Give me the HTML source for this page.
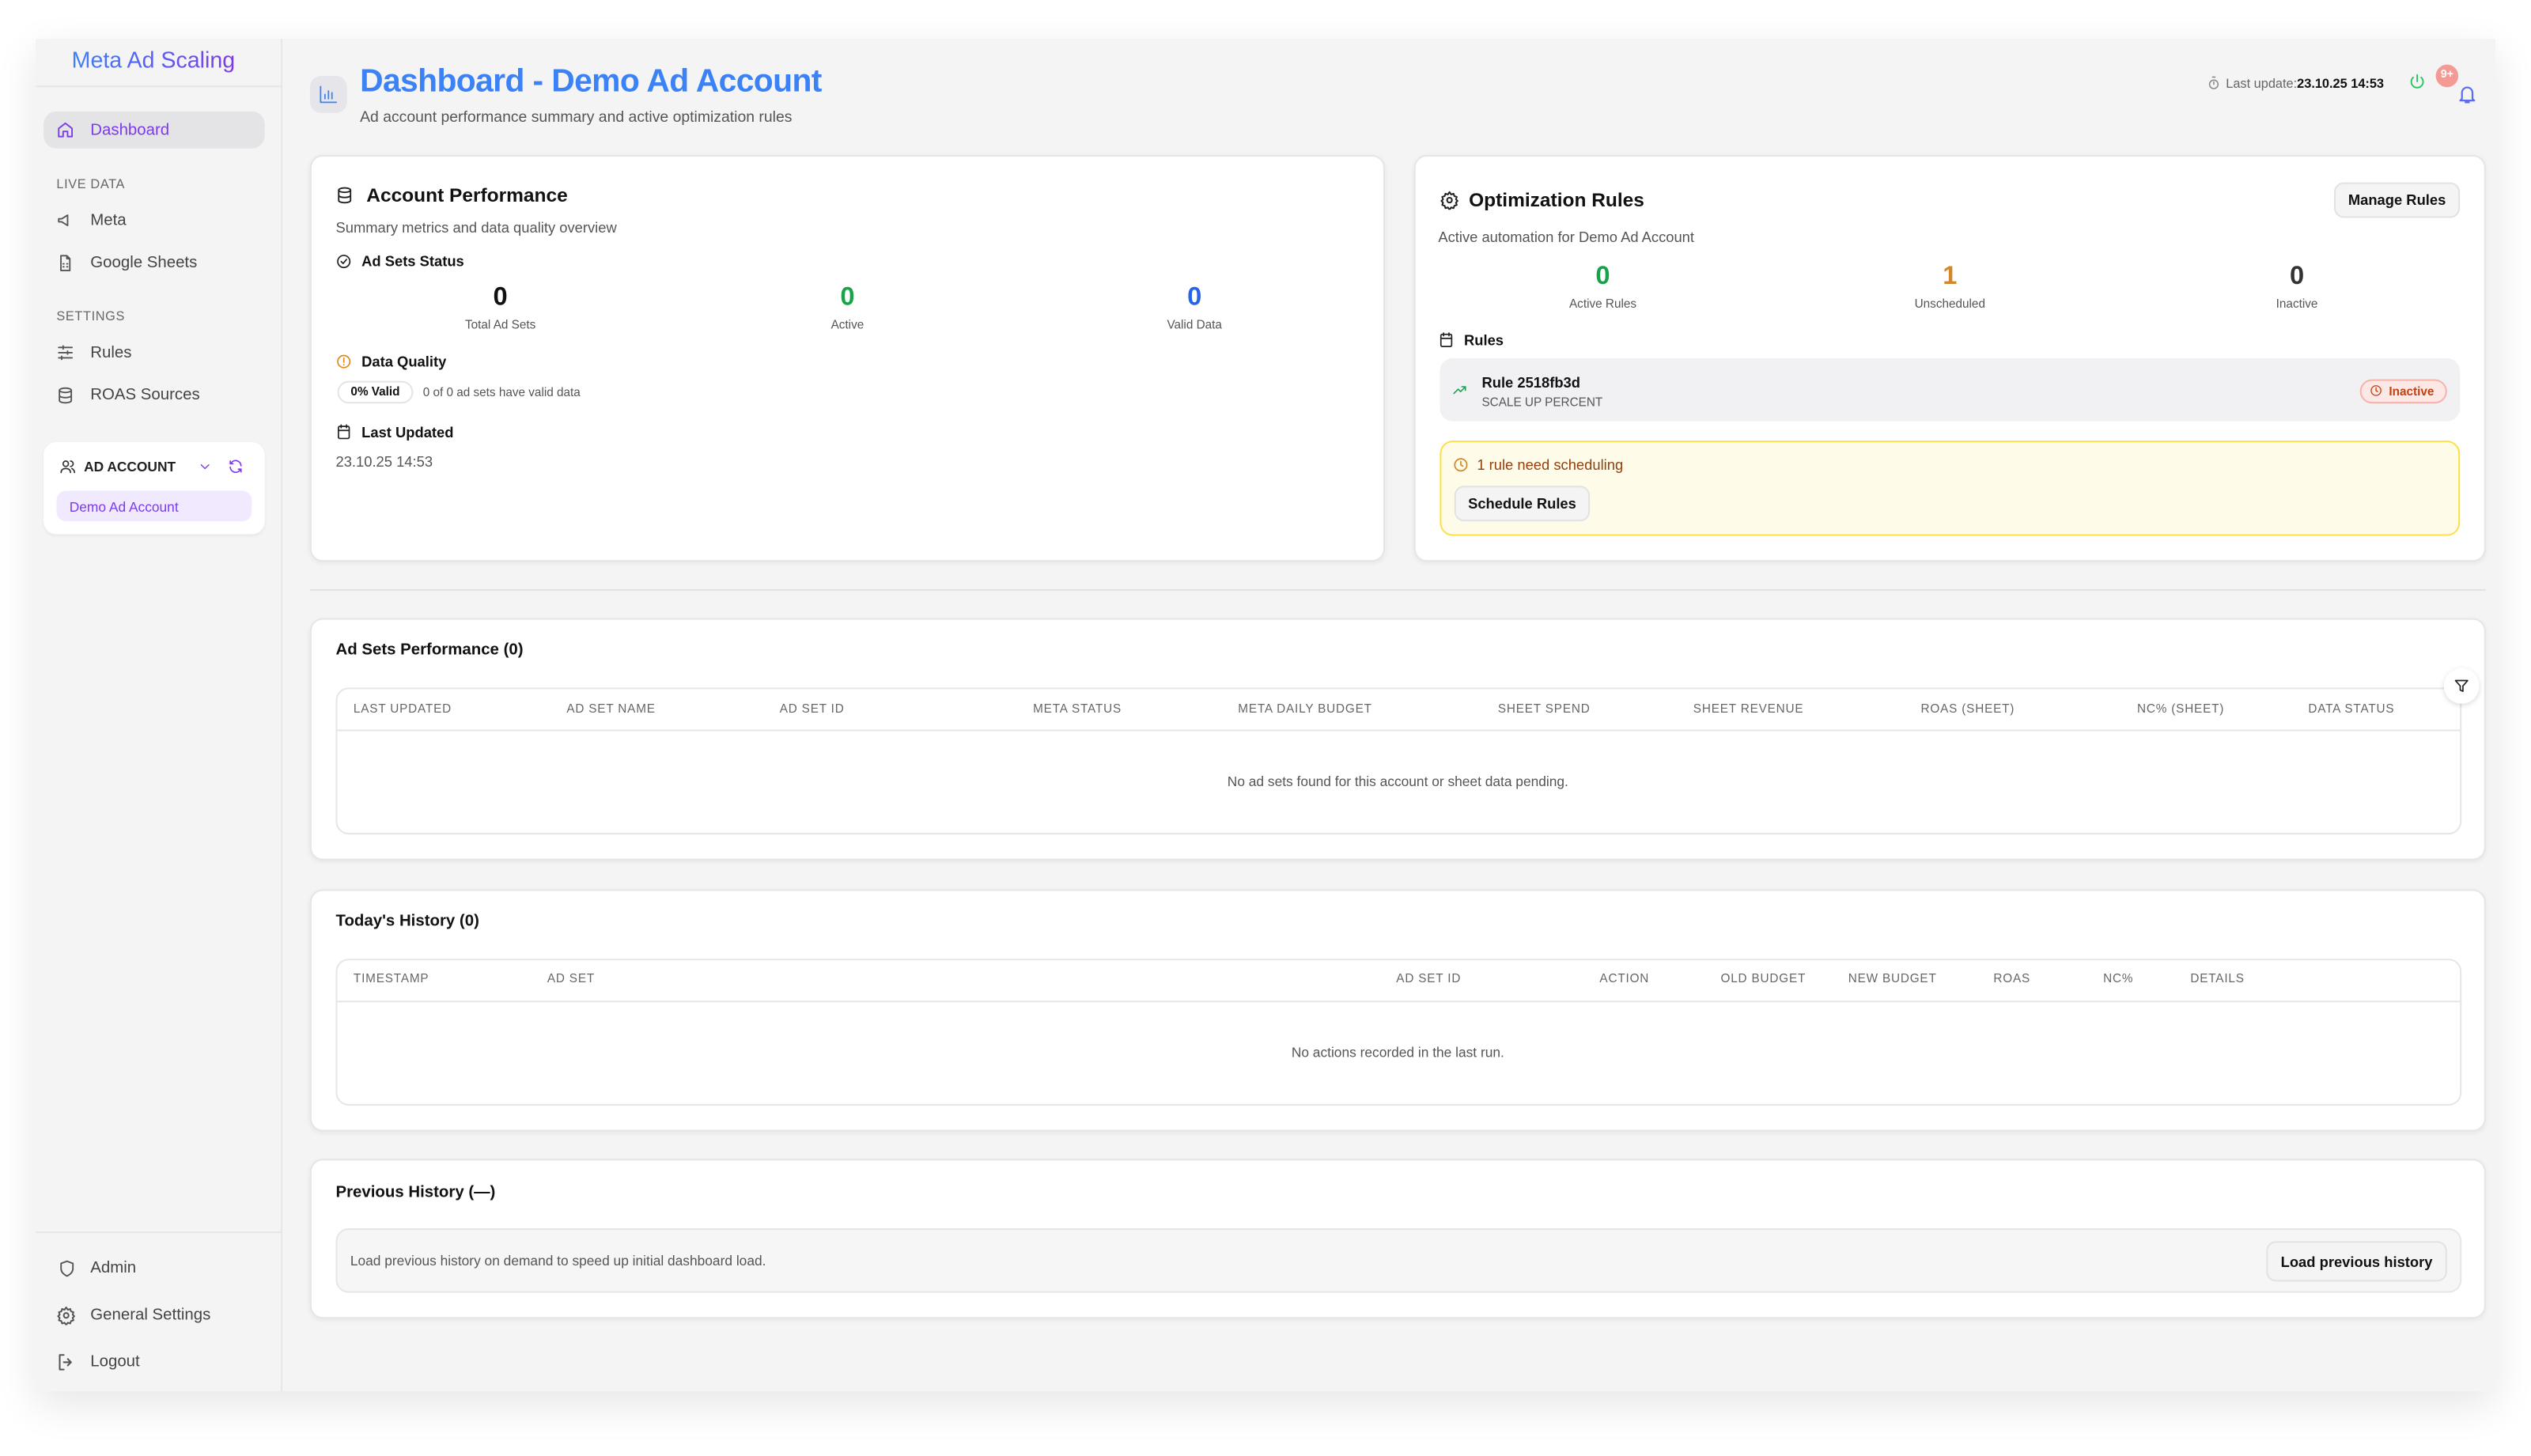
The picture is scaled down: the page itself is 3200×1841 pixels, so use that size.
<!DOCTYPE html>
<html><head><meta charset="utf-8"><style>
*{box-sizing:border-box;margin:0;padding:0}
html,body{width:3200px;height:1840px;overflow:hidden;background:#fff}
#w{position:absolute;left:0;top:0;width:1568px;height:902px;transform:scale(2.0408);transform-origin:0 0;font-family:"Liberation Sans",sans-serif;color:#111}
.a{position:absolute;white-space:nowrap}
.frame{position:absolute;left:22px;top:24px;width:1524px;height:838px;background:#f4f4f4;box-shadow:0 8px 24px rgba(0,0,0,.10)}
.side{position:absolute;left:22px;top:24px;width:153px;height:838px;border-right:1px solid #e6e6e6}
.card{position:absolute;background:#fff;border:1px solid #e6e6e6;border-radius:8px;box-shadow:0 1px 3px rgba(0,0,0,.06)}
.nav{font-size:10px;color:#444;transform:translateY(-50%)}
.sec{font-size:8px;color:#666;letter-spacing:.3px;transform:translateY(-50%)}
.c{transform:translate(-50%,-50%);text-align:center}
.m{transform:translateY(-50%)}
svg.i{position:absolute;fill:none;stroke-width:2;stroke-linecap:round;stroke-linejoin:round}
.th{font-size:7.5px;color:#666;letter-spacing:.4px;transform:translateY(-50%)}
.btn{position:absolute;background:#f4f4f4;border:1px solid #e2e2e2;border-radius:6px;font-size:9px;font-weight:bold;display:flex;align-items:center;justify-content:center;color:#111}
</style></head><body><div id="w">
<div class="frame"></div>
<div class="side"></div>
<div class="a c" style="left:95px;top:37px;font-size:14px;background:linear-gradient(90deg,#3b82f6,#7c3aed);-webkit-background-clip:text;color:transparent">Meta Ad Scaling</div>
<div class="a" style="left:22px;top:53px;width:153px;height:1px;background:#e6e6e6"></div>
<div class="a" style="left:27px;top:69px;width:137px;height:23px;background:#e4e4e7;border-radius:8px"></div>
<svg class="i" style="left:35px;top:75px;stroke:#7c3aed" width="11" height="11" viewBox="0 0 24 24"><path d="M3 10l9-7 9 7v11h-6v-7H9v7H3z"/></svg>
<div class="a nav" style="left:56px;top:81px;color:#7c3aed">Dashboard</div>
<div class="a sec" style="left:35px;top:114px">LIVE DATA</div>
<svg class="i" style="left:35px;top:131px;stroke:#555" width="11" height="11" viewBox="0 0 24 24"><path d="M3 10v4h4l8 5V5L7 10z"/></svg>
<div class="a nav" style="left:56px;top:137px">Meta</div>
<svg class="i" style="left:35px;top:157px;stroke:#555" width="11" height="12" viewBox="0 0 24 24"><path d="M14 2H6v20h12V6z M14 2v4h4 M9 13h1 M14 13h1 M9 17h1 M14 17h1"/></svg>
<div class="a nav" style="left:56px;top:163px">Google Sheets</div>
<div class="a sec" style="left:35px;top:196px">SETTINGS</div>
<svg class="i" style="left:35px;top:213px;stroke:#555" width="11" height="11" viewBox="0 0 24 24"><path d="M3 5h18M3 12h18M3 19h18M9 3v4M15 10v4M7 17v4"/></svg>
<div class="a nav" style="left:56px;top:219px">Rules</div>
<svg class="i" style="left:35px;top:239px;stroke:#555" width="11" height="12" viewBox="0 0 24 24"><ellipse cx="12" cy="5" rx="8" ry="3"/><path d="M4 5v14c0 1.7 3.6 3 8 3s8-1.3 8-3V5M4 12c0 1.7 3.6 3 8 3s8-1.3 8-3"/></svg>
<div class="a nav" style="left:56px;top:245px">ROAS Sources</div>
<div class="a" style="left:27px;top:274px;width:137px;height:57px;background:#fff;border-radius:8px;box-shadow:0 1px 2px rgba(0,0,0,.05)"></div>
<svg class="i" style="left:37px;top:284px;stroke:#333" width="10" height="10" viewBox="0 0 24 24"><circle cx="9" cy="8" r="4"/><path d="M2 21c0-4 3-6 7-6s7 2 7 6M16 4a4 4 0 010 8M22 21c0-3-2-5-4-6"/></svg>
<div class="a m" style="left:52px;top:289px;font-size:8.5px;font-weight:bold;color:#222">AD ACCOUNT</div>
<svg class="i" style="left:123px;top:285px;stroke:#7c3aed" width="8" height="8" viewBox="0 0 24 24"><path d="M5 9l7 7 7-7"/></svg>
<svg class="i" style="left:141px;top:284px;stroke:#7c3aed" width="10" height="10" viewBox="0 0 24 24"><path d="M20 11a8 8 0 00-14-5L4 8M4 4v4h4M4 13a8 8 0 0014 5l2-2M20 20v-4h-4"/></svg>
<div class="a" style="left:35px;top:304px;width:121px;height:19px;background:#f1eafe;border-radius:6px"></div>
<div class="a m" style="left:43px;top:313.5px;font-size:8.5px;color:#7c3aed">Demo Ad Account</div>
<div class="a" style="left:22px;top:763px;width:153px;height:1px;background:#e6e6e6"></div>
<svg class="i" style="left:36px;top:780px;stroke:#555" width="11" height="12" viewBox="0 0 24 24"><path d="M12 2l8 3v7c0 5-4 8-8 10-4-2-8-5-8-10V5z"/></svg>
<div class="a nav" style="left:56px;top:786px">Admin</div>
<svg class="i" style="left:35px;top:809px;stroke:#555" width="12" height="12" viewBox="0 0 24 24"><circle cx="12" cy="12" r="3"/><path d="M12 2l2 3 3-1 1 3 3 1-1 3 2 2-2 2 1 3-3 1-1 3-3-1-2 3-2-3-3 1-1-3-3-1 1-3-2-2 2-2-1-3 3-1 1-3 3 1z"/></svg>
<div class="a nav" style="left:56px;top:815px">General Settings</div>
<svg class="i" style="left:35px;top:838px;stroke:#555" width="12" height="12" viewBox="0 0 24 24"><path d="M9 3H4v18h5M14 8l4 4-4 4M18 12H9"/></svg>
<div class="a nav" style="left:56px;top:844px">Logout</div>

<div class="a" style="left:192px;top:47px;width:23px;height:23px;background:#e6e6ea;border-radius:7px"></div>
<svg class="i" style="left:197px;top:52px;stroke:#3b82f6;stroke-width:1.6" width="13" height="13" viewBox="0 0 24 24"><path d="M3 3v18h18M8 17v-5M12 17V8M16 17v-7"/></svg>
<div class="a m" style="left:223px;top:51px;font-size:20px;font-weight:bold;color:#3b82f6;letter-spacing:-.3px">Dashboard - Demo Ad Account</div>
<div class="a m" style="left:223px;top:73px;font-size:9.5px;color:#555">Ad account performance summary and active optimization rules</div>
<svg class="i" style="left:1367px;top:47px;stroke:#888" width="9" height="9" viewBox="0 0 24 24"><circle cx="12" cy="14" r="7"/><path d="M12 14V10M10 2h4"/></svg>
<div class="a m" style="left:1379px;top:52px;font-size:8px;color:#666">Last update:<b style="color:#111">23.10.25 14:53</b></div>
<svg class="i" style="left:1492px;top:45px;stroke:#22c55e" width="11" height="11" viewBox="0 0 24 24"><path d="M12 3v9M6.5 6.5a8 8 0 1011 0"/></svg>
<div class="a c" style="left:1516px;top:47px;width:14px;height:14px;border-radius:50%;background:#f49a94;color:#fff;font-size:7px;font-weight:bold;line-height:14px">9+</div>
<svg class="i" style="left:1522px;top:52px;stroke:#5b6cf0" width="13" height="13" viewBox="0 0 24 24"><path d="M6 17V10a6 6 0 0112 0v7l2 2H4zM10 21h4"/></svg>

<!-- card1 -->
<div class="card" style="left:192px;top:96px;width:666px;height:252px"></div>
<svg class="i" style="left:208px;top:115px;stroke:#222" width="11" height="12" viewBox="0 0 24 24"><ellipse cx="12" cy="5" rx="8" ry="3"/><path d="M4 5v14c0 1.7 3.6 3 8 3s8-1.3 8-3V5M4 12c0 1.7 3.6 3 8 3s8-1.3 8-3"/></svg>
<div class="a m" style="left:227px;top:121px;font-size:12px;font-weight:bold">Account Performance</div>
<div class="a m" style="left:208px;top:141px;font-size:9px;color:#555">Summary metrics and data quality overview</div>
<svg class="i" style="left:208px;top:157px;stroke:#222" width="10" height="10" viewBox="0 0 24 24"><circle cx="12" cy="12" r="9"/><path d="M8 12l3 3 5-6"/></svg>
<div class="a m" style="left:224px;top:162px;font-size:9px;font-weight:bold">Ad Sets Status</div>
<div class="a c" style="left:310px;top:185px;font-size:16px;font-weight:bold">0</div>
<div class="a c" style="left:310px;top:201px;font-size:7.5px;color:#555">Total Ad Sets</div>
<div class="a c" style="left:525px;top:185px;font-size:16px;font-weight:bold;color:#16a34a">0</div>
<div class="a c" style="left:525px;top:201px;font-size:7.5px;color:#555">Active</div>
<div class="a c" style="left:740px;top:185px;font-size:16px;font-weight:bold;color:#2563eb">0</div>
<div class="a c" style="left:740px;top:201px;font-size:7.5px;color:#555">Valid Data</div>
<svg class="i" style="left:208px;top:219px;stroke:#e08a1e" width="10" height="10" viewBox="0 0 24 24"><circle cx="12" cy="12" r="9"/><path d="M12 7v6M12 16.5v.5"/></svg>
<div class="a m" style="left:224px;top:224px;font-size:9px;font-weight:bold">Data Quality</div>
<div class="a" style="left:209px;top:236px;width:47px;height:14px;border:1px solid #e4e4e4;border-radius:7px;font-size:7.5px;font-weight:bold;text-align:center;line-height:12px">0% Valid</div>
<div class="a m" style="left:262px;top:243px;font-size:7.5px;color:#555">0 of 0 ad sets have valid data</div>
<svg class="i" style="left:208px;top:262px;stroke:#222" width="10" height="11" viewBox="0 0 24 24"><rect x="4" y="4" width="16" height="18" rx="2"/><path d="M4 10h16M8 2v4M16 2v4"/></svg>
<div class="a m" style="left:224px;top:268px;font-size:9px;font-weight:bold">Last Updated</div>
<div class="a m" style="left:208px;top:286px;font-size:9px;color:#555">23.10.25 14:53</div>

<!-- card2 -->
<div class="card" style="left:876px;top:96px;width:664px;height:252px"></div>
<svg class="i" style="left:892px;top:118px;stroke:#222" width="12" height="12" viewBox="0 0 24 24"><circle cx="12" cy="12" r="3"/><path d="M12 2l2 3 3-1 1 3 3 1-1 3 2 2-2 2 1 3-3 1-1 3-3-1-2 3-2-3-3 1-1-3-3-1 1-3-2-2 2-2-1-3 3-1 1-3 3 1z"/></svg>
<div class="a m" style="left:910px;top:124px;font-size:12px;font-weight:bold">Optimization Rules</div>
<div class="btn" style="left:1446px;top:113px;width:78px;height:22px">Manage Rules</div>
<div class="a m" style="left:891px;top:147px;font-size:9px;color:#555">Active automation for Demo Ad Account</div>
<div class="a c" style="left:993px;top:172px;font-size:16px;font-weight:bold;color:#16a34a">0</div>
<div class="a c" style="left:993px;top:188px;font-size:7.5px;color:#555">Active Rules</div>
<div class="a c" style="left:1208px;top:172px;font-size:16px;font-weight:bold;color:#d4872a">1</div>
<div class="a c" style="left:1208px;top:188px;font-size:7.5px;color:#555">Unscheduled</div>
<div class="a c" style="left:1423px;top:172px;font-size:16px;font-weight:bold;color:#333">0</div>
<div class="a c" style="left:1423px;top:188px;font-size:7.5px;color:#555">Inactive</div>
<svg class="i" style="left:891px;top:205px;stroke:#222" width="10" height="11" viewBox="0 0 24 24"><rect x="4" y="4" width="16" height="18" rx="2"/><path d="M4 10h16M8 2v4M16 2v4"/></svg>
<div class="a m" style="left:907px;top:211px;font-size:9px;font-weight:bold">Rules</div>
<div class="a" style="left:892px;top:222px;width:632px;height:39px;background:#f1f1f3;border-radius:8px"></div>
<svg class="i" style="left:899px;top:237px;stroke:#16a34a" width="11" height="9" viewBox="0 0 24 24"><path d="M2 18l7-7 4 4 8-8M15 7h6v6"/></svg>
<div class="a m" style="left:918px;top:237px;font-size:9px;font-weight:bold">Rule 2518fb3d</div>
<div class="a m" style="left:918px;top:249px;font-size:7.5px;color:#555">SCALE UP PERCENT</div>
<div class="a" style="left:1462px;top:235px;width:54px;height:15px;background:#fde8e6;border:1px solid #f5b3aa;border-radius:8px;font-size:7.5px;font-weight:bold;color:#c2410c;line-height:13px;padding-left:17px">Inactive</div>
<svg class="i" style="left:1468px;top:238px;stroke:#c2410c" width="8" height="8" viewBox="0 0 24 24"><circle cx="12" cy="12" r="9"/><path d="M12 7v5l3 2"/></svg>
<div class="a" style="left:892px;top:273px;width:632px;height:59px;background:#fefce8;border:1px solid #fde047;border-radius:8px"></div>
<svg class="i" style="left:900px;top:283px;stroke:#d4872a" width="10" height="10" viewBox="0 0 24 24"><circle cx="12" cy="12" r="9"/><path d="M12 7v5l3 2"/></svg>
<div class="a m" style="left:915px;top:288px;font-size:9px;color:#92400e">1 rule need scheduling</div>
<div class="btn" style="left:901px;top:301px;width:84px;height:22px">Schedule Rules</div>

<div class="a" style="left:192px;top:365px;width:1348px;height:1px;background:#e2e2e2"></div>

<!-- card3 -->
<div class="card" style="left:192px;top:383px;width:1348px;height:150px"></div>
<div class="a m" style="left:208px;top:403px;font-size:10px;font-weight:bold">Ad Sets Performance (0)</div>
<div class="a" style="left:208px;top:426px;width:1317px;height:91px;border:1px solid #e6e6e6;border-radius:8px"></div>
<div class="a" style="left:208px;top:452px;width:1317px;height:1px;background:#e6e6e6"></div>
<div class="a th" style="left:219px;top:439px">LAST UPDATED</div>
<div class="a th" style="left:351px;top:439px">AD SET NAME</div>
<div class="a th" style="left:483px;top:439px">AD SET ID</div>
<div class="a th" style="left:640px;top:439px">META STATUS</div>
<div class="a th" style="left:767px;top:439px">META DAILY BUDGET</div>
<div class="a th" style="left:928px;top:439px">SHEET SPEND</div>
<div class="a th" style="left:1049px;top:439px">SHEET REVENUE</div>
<div class="a th" style="left:1190px;top:439px">ROAS (SHEET)</div>
<div class="a th" style="left:1324px;top:439px">NC% (SHEET)</div>
<div class="a th" style="left:1430px;top:439px">DATA STATUS</div>
<div class="a" style="left:1514px;top:414px;width:22px;height:22px;border-radius:50%;background:#fff;box-shadow:0 1px 3px rgba(0,0,0,.15)"></div>
<svg class="i" style="left:1520px;top:420px;stroke:#222" width="10" height="10" viewBox="0 0 24 24"><path d="M3 4h18l-7 8v8l-4-2v-6z"/></svg>
<div class="a c" style="left:866px;top:484px;font-size:8.5px;color:#555">No ad sets found for this account or sheet data pending.</div>

<!-- card4 -->
<div class="card" style="left:192px;top:551px;width:1348px;height:150px"></div>
<div class="a m" style="left:208px;top:571px;font-size:10px;font-weight:bold">Today's History (0)</div>
<div class="a" style="left:208px;top:594px;width:1317px;height:91px;border:1px solid #e6e6e6;border-radius:8px"></div>
<div class="a" style="left:208px;top:620px;width:1317px;height:1px;background:#e6e6e6"></div>
<div class="a th" style="left:219px;top:606px">TIMESTAMP</div>
<div class="a th" style="left:339px;top:606px">AD SET</div>
<div class="a th" style="left:865px;top:606px">AD SET ID</div>
<div class="a th" style="left:991px;top:606px">ACTION</div>
<div class="a th" style="left:1066px;top:606px">OLD BUDGET</div>
<div class="a th" style="left:1145px;top:606px">NEW BUDGET</div>
<div class="a th" style="left:1235px;top:606px">ROAS</div>
<div class="a th" style="left:1303px;top:606px">NC%</div>
<div class="a th" style="left:1357px;top:606px">DETAILS</div>
<div class="a c" style="left:866px;top:652px;font-size:8.5px;color:#555">No actions recorded in the last run.</div>

<!-- card5 -->
<div class="card" style="left:192px;top:718px;width:1348px;height:99px"></div>
<div class="a m" style="left:208px;top:739px;font-size:10px;font-weight:bold">Previous History (—)</div>
<div class="a" style="left:208px;top:761px;width:1317px;height:40px;background:#f6f6f6;border:1px solid #e6e6e6;border-radius:8px"></div>
<div class="a m" style="left:217px;top:781px;font-size:8.5px;color:#555">Load previous history on demand to speed up initial dashboard load.</div>
<div class="btn" style="left:1404px;top:769px;width:112px;height:25px">Load previous history</div>
</div></body></html>
